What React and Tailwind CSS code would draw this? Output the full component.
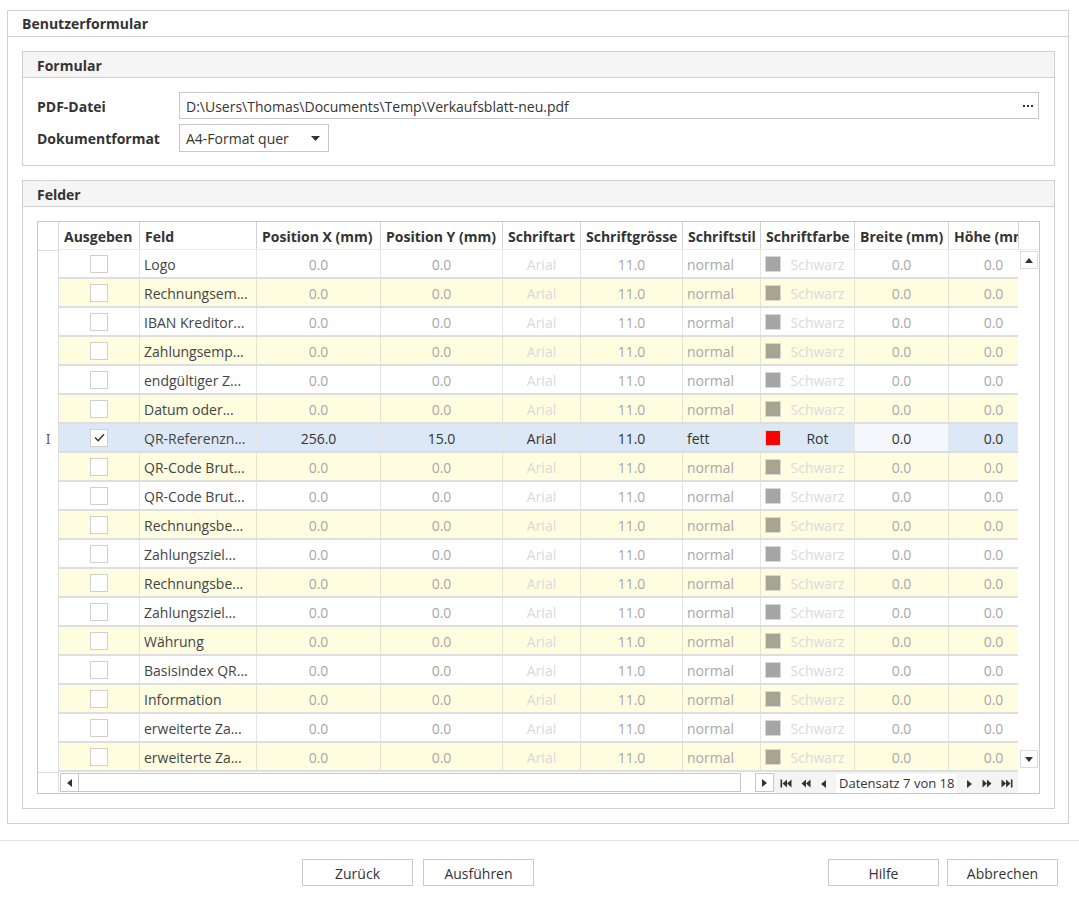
import React from "react";

const rows = [
  "Logo",
  "Rechnungsem...",
  "IBAN Kreditor...",
  "Zahlungsemp...",
  "endgültiger Z...",
  "Datum oder...",
  "QR-Referenzn...",
  "QR-Code Brut...",
  "QR-Code Brut...",
  "Rechnungsbe...",
  "Zahlungsziel...",
  "Rechnungsbe...",
  "Zahlungsziel...",
  "Währung",
  "Basisindex QR...",
  "Information",
  "erweiterte Za...",
  "erweiterte Za...",
];

const cols = [
  { t: "Ausgeben", w: "w-[81px]" },
  { t: "Feld", w: "w-[117px]" },
  { t: "Position X (mm)", w: "w-[124px]" },
  { t: "Position Y (mm)", w: "w-[122px]" },
  { t: "Schriftart", w: "w-[78px]" },
  { t: "Schriftgrösse", w: "w-[102px]" },
  { t: "Schriftstil", w: "w-[78px]" },
  { t: "Schriftfarbe", w: "w-[94px]" },
  { t: "Breite (mm)", w: "w-[94px]" },
  { t: "Höhe (mm)", w: "w-[90px]" },
];

function Tri({ dir = "left", className = "" }) {
  const pts = dir === "left" ? "6,0 6,8 1,4" : dir === "right" ? "1,0 1,8 6,4" : dir === "up" ? "0,6 8,6 4,1" : "0,1 8,1 4,6";
  const vb = dir === "up" || dir === "down" ? "0 0 8 7" : "0 0 7 8";
  const cls = dir === "up" || dir === "down" ? "w-[8px] h-[7px]" : "w-[7px] h-[8px]";
  return (
    <svg viewBox={vb} className={`${cls} ${className}`}>
      <polygon points={pts} fill="#333" />
    </svg>
  );
}

function NavIcon({ kind }) {
  if (kind === "first")
    return (
      <svg viewBox="0 0 12 9" className="w-[12px] h-[9px]">
        <rect x="0.5" y="0.5" width="1.6" height="8" fill="#333" />
        <polygon points="7,0.5 7,8.5 2.5,4.5" fill="#333" />
        <polygon points="11.5,0.5 11.5,8.5 7,4.5" fill="#333" />
      </svg>
    );
  if (kind === "last")
    return (
      <svg viewBox="0 0 12 9" className="w-[12px] h-[9px]">
        <polygon points="0.5,0.5 0.5,8.5 5,4.5" fill="#333" />
        <polygon points="5,0.5 5,8.5 9.5,4.5" fill="#333" />
        <rect x="9.9" y="0.5" width="1.6" height="8" fill="#333" />
      </svg>
    );
  if (kind === "prevPage")
    return (
      <svg viewBox="0 0 10 9" className="w-[10px] h-[9px]">
        <polygon points="5,0.5 5,8.5 0.5,4.5" fill="#333" />
        <polygon points="9.5,0.5 9.5,8.5 5,4.5" fill="#333" />
      </svg>
    );
  if (kind === "nextPage")
    return (
      <svg viewBox="0 0 10 9" className="w-[10px] h-[9px]">
        <polygon points="0.5,0.5 0.5,8.5 5,4.5" fill="#333" />
        <polygon points="5,0.5 5,8.5 9.5,4.5" fill="#333" />
      </svg>
    );
  if (kind === "prev") return <Tri dir="left" />;
  return <Tri dir="right" />;
}

function Row({ name, i }) {
  const sel = i === 6;
  const yellow = i % 2 === 1;
  const bg = sel ? "bg-[#dde8f6]" : yellow ? "bg-[#fefde0]" : "bg-white";
  const line = yellow ? "border-[#e6e4cf]" : "border-[#e6e6e6]";
  const num = sel ? "text-[#333]" : "text-[#a8a8a8]";
  const faint = sel ? "text-[#333]" : "text-[#dadada]";
  const swatch = sel ? "bg-[#ff0000]" : yellow ? "bg-[#a7a58f]" : "bg-[#a6a6a6]";
  const cell = `h-full flex items-center shrink-0 border-r ${line}`;
  return (
    <div className={`flex h-[29px] border-b-2 border-[#dedede] ${bg}`}>
      <div className={`${cell} w-[81px] justify-center`}>
        <div className="w-[18px] h-[18px] border border-[#cfcfcf] bg-white flex items-center justify-center">
          {sel && (
            <svg viewBox="0 0 12 10" className="w-[11px] h-[9px]">
              <polyline points="1,5 4.5,8.5 11,1.5" fill="none" stroke="#333" strokeWidth="1.6" />
            </svg>
          )}
        </div>
      </div>
      <div className={`${cell} w-[117px] px-[4px] pt-[1px] text-[#444]`}>{name}</div>
      <div className={`${cell} w-[124px] justify-center pt-[1px] ${num}`}>{sel ? "256.0" : "0.0"}</div>
      <div className={`${cell} w-[122px] justify-center pt-[1px] ${num}`}>{sel ? "15.0" : "0.0"}</div>
      <div className={`${cell} w-[78px] justify-center pt-[1px] ${faint}`}>Arial</div>
      <div className={`${cell} w-[102px] justify-center pt-[1px] ${num}`}>11.0</div>
      <div className={`${cell} w-[78px] px-[4px] pt-[1px] ${num}`}>{sel ? "fett" : "normal"}</div>
      <div className={`${cell} w-[94px] pl-[4px]`}>
        <div className="w-[16px] h-[16px] border border-[#d8d8d8] shrink-0">
          <div className={`w-full h-full ${swatch}`} />
        </div>
        <div className={`flex-1 text-center pt-[1px] ${faint}`}>{sel ? "Rot" : "Schwarz"}</div>
      </div>
      <div className={`${cell} w-[94px] justify-center pt-[1px] ${num} ${sel ? "bg-[#f4f8fd]" : ""}`}>0.0</div>
      <div className={`${cell} w-[90px] justify-center pt-[1px] ${num}`}>0.0</div>
    </div>
  );
}

function GroupBox({ title, className = "", children }) {
  return (
    <div className={`border border-[#d0d0d0] flex flex-col ${className}`}>
      <div className="h-[26px] bg-[#f5f5f5] border-b border-[#d0d0d0] px-[14px] pt-[2px] flex items-center font-bold text-[14px] text-[#333] shrink-0">
        {title}
      </div>
      {children}
    </div>
  );
}

function Button({ children }) {
  return (
    <div className="w-[111px] h-[27px] border border-[#cacaca] bg-white flex items-center justify-center pt-[1px] text-[14px] text-[#333]">
      {children}
    </div>
  );
}

export default function App() {
  return (
    <div className="w-[1079px] h-[897px] bg-white font-['Open_Sans',sans-serif] text-[14px] text-[#333] flex flex-col overflow-hidden">
      <div className="ml-[7px] mt-[10px] w-[1062px] h-[814px] border border-[#d0d0d0] flex flex-col">
        <div className="h-[26px] border-b border-[#d0d0d0] px-[14px] flex items-center font-bold text-[14px] text-[#333] shrink-0">
          Benutzerformular
        </div>
        <div className="pl-[14px] pt-[14px] flex flex-col gap-[14px]">
          <GroupBox title="Formular" className="w-[1033px] h-[115px]">
            <div className="px-[14px] pt-[14px] flex flex-col gap-[5px]">
              <div className="flex items-center">
                <div className="w-[142px] font-bold pt-[1px]">PDF-Datei</div>
                <div className="w-[860px] h-[27px] border border-[#c8c8c8] flex items-center pl-[6px] pr-[4px] pt-[1px]">
                  <span className="flex-1">D:\Users\Thomas\Documents\Temp\Verkaufsblatt-neu.pdf</span>
                  <span className="flex gap-[2px] items-center mr-[1px]">
                    <span className="w-[2px] h-[2px] bg-[#333]" />
                    <span className="w-[2px] h-[2px] bg-[#333]" />
                    <span className="w-[2px] h-[2px] bg-[#333]" />
                  </span>
                </div>
              </div>
              <div className="flex items-center">
                <div className="w-[142px] font-bold pt-[1px]">Dokumentformat</div>
                <div className="w-[150px] h-[28px] border border-[#c8c8c8] flex items-center pl-[6px] pr-[8px] pt-[1px]">
                  <span className="flex-1">A4-Format quer</span>
                  <svg viewBox="0 0 9 5" className="w-[9px] h-[5px]">
                    <polygon points="0,0 9,0 4.5,5" fill="#333" />
                  </svg>
                </div>
              </div>
            </div>
          </GroupBox>
          <GroupBox title="Felder" className="w-[1033px] h-[629px]">
            <div className="pl-[14px] pt-[14px]">
              <div className="w-[1003px] h-[573px] border border-[#c8c8c8] flex flex-col">
                <div className="flex h-[550px]">
                  <div className="w-[21px] border-r border-[#dcdcdc] flex flex-col shrink-0">
                    <div className="h-[29px] border-b border-[#dcdcdc]" />
                    {rows.map((_, i) => (
                      <div key={i} className="h-[29px] flex items-center justify-center pt-[1px] text-[12px] text-[#555] font-['DejaVu_Serif',serif]">
                        {i === 6 ? "I" : ""}
                      </div>
                    ))}
                  </div>
                  <div className="flex flex-col w-[980px]">
                    <div className="flex h-[28px] border-b border-[#ececec]">
                      <div className="w-[959px] flex overflow-hidden">
                        {cols.map((c) => (
                          <div key={c.t} className={`${c.w} shrink-0 h-full border-r border-[#d4d4d4] px-[5px] pt-[2px] flex items-center font-bold whitespace-nowrap text-[#333]`}>
                            {c.t}
                          </div>
                        ))}
                      </div>
                      <div className="w-[21px] h-full border-l border-[#d4d4d4]" />
                    </div>
                    <div className="flex">
                      <div className="w-[959px] overflow-hidden flex flex-col">
                        {rows.map((n, i) => (
                          <Row key={i} name={n} i={i} />
                        ))}
                      </div>
                      <div className="w-[21px] h-[522px] flex flex-col justify-between items-center pt-[1px] pb-[4px]">
                        <div className="w-[18px] h-[18px] border border-[#dcdcdc] flex items-center justify-center">
                          <Tri dir="up" />
                        </div>
                        <div className="w-[18px] h-[18px] border border-[#dcdcdc] flex items-center justify-center">
                          <Tri dir="down" />
                        </div>
                      </div>
                    </div>
                  </div>
                </div>
                <div className="flex h-[21px] items-stretch">
                  <div className="w-[21px] border-r border-t border-[#dcdcdc] shrink-0" />
                  <div className="ml-[1px] mt-[1px] mb-[1px] w-[681px] border border-[#c8c8c8] flex">
                    <div className="w-[18px] border-r border-[#c8c8c8] flex items-center justify-center">
                      <Tri dir="left" />
                    </div>
                  </div>
                  <div className="ml-[14px] mt-[1px] mb-[1px] w-[19px] border border-[#c8c8c8] flex items-center justify-center">
                    <Tri dir="right" />
                  </div>
                  <div className="flex-1 flex items-center bg-[#f4f4f4] mr-[21px] pl-[6px] pt-[2px] gap-[9px]">
                    <NavIcon kind="first" />
                    <NavIcon kind="prevPage" />
                    <NavIcon kind="prev" />
                    <span className="bg-white px-[3px] text-[13px] text-[#333] whitespace-nowrap">Datensatz 7 von 18</span>
                    <NavIcon kind="next" />
                    <NavIcon kind="nextPage" />
                    <NavIcon kind="last" />
                  </div>
                </div>
              </div>
            </div>
          </GroupBox>
        </div>
      </div>
      <div className="mt-[16px] border-t border-[#e0e0e0] h-[1px]" />
      <div className="flex mt-[18px]">
        <div className="ml-[302px] flex gap-[10px]">
          <Button>Zurück</Button>
          <Button>Ausführen</Button>
        </div>
        <div className="ml-[294px] flex gap-[8px]">
          <Button>Hilfe</Button>
          <Button>Abbrechen</Button>
        </div>
      </div>
    </div>
  );
}
